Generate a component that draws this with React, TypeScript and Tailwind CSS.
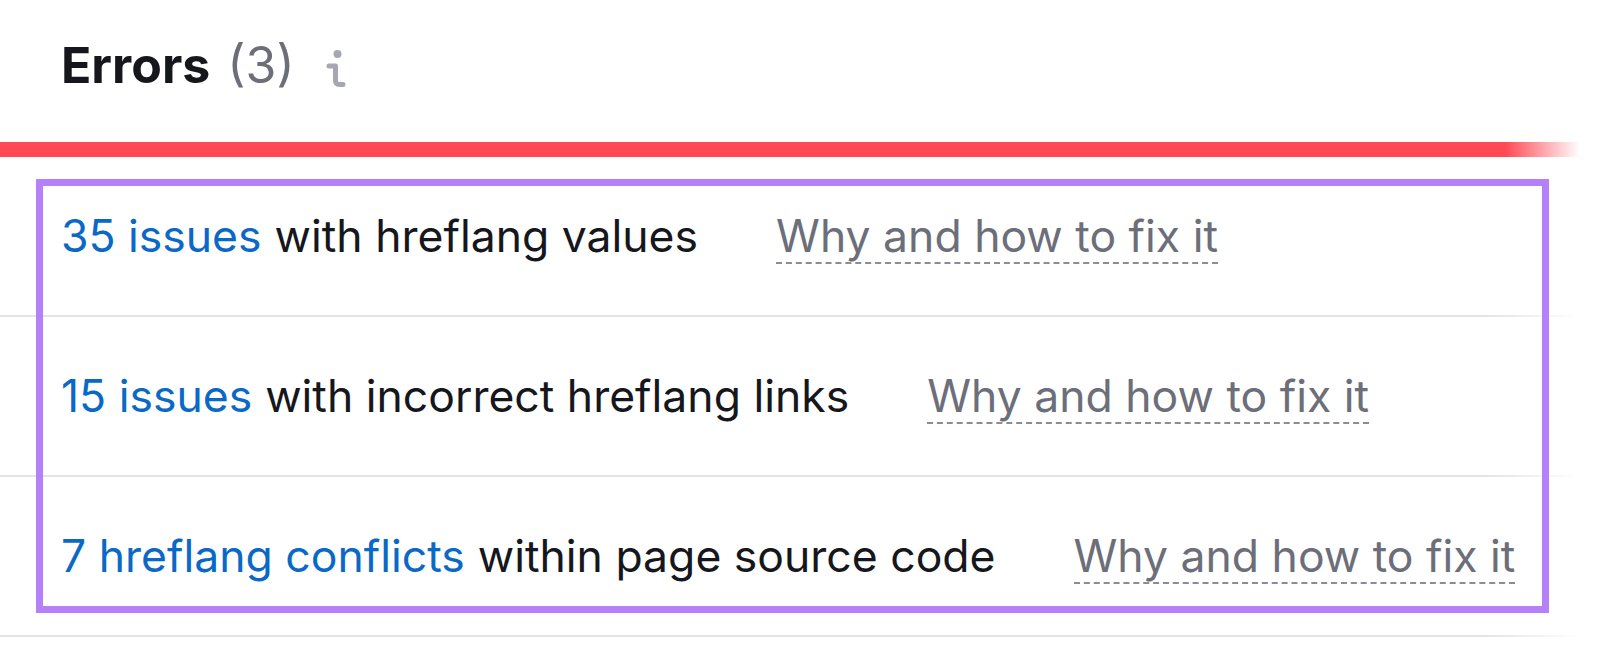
import { Fragment } from "react";

type Issue = { count: string; rest: string };

const ISSUES: Issue[] = [
  { count: "35 issues", rest: "with hreflang values" },
  { count: "15 issues", rest: "with incorrect hreflang links" },
  { count: "7 hreflang conflicts", rest: "within page source code" },
];

function InfoIcon() {
  return (
    <svg width="24" height="40" viewBox="0 0 24 40" fill="none" className="text-[#a5a7b2]">
      <circle cx="14.5" cy="5" r="4" fill="currentColor" />
      <path
        d="M6 17 H12.5 V31.5 Q12.5 35.5 16.5 35.5 H20"
        stroke="currentColor"
        strokeWidth="5"
        strokeLinecap="round"
        strokeLinejoin="round"
      />
    </svg>
  );
}

function Divider() {
  return (
    <div className="flex h-[2px] w-[1580px]">
      <div className="flex-1 bg-[#e4e4e8]" />
      <div className="w-[90px] bg-gradient-to-r from-[#e4e4e8] to-transparent" />
    </div>
  );
}

export default function App() {
  return (
    <div className="relative h-[665px] w-[1600px] overflow-hidden bg-white font-['Inter',sans-serif]">
      {/* Section title */}
      <div className="flex h-[142px] items-start pl-[61px] pt-[40px]">
        <h2 className="text-[50px] font-bold leading-none text-[#16171c]">Errors</h2>
        <span className="ml-[17px] text-[50px] leading-none text-[#6c6e79]">(3)</span>
        <span className="ml-[28px] mt-[9px]">
          <InfoIcon />
        </span>
      </div>

      {/* Severity bar */}
      <div className="flex h-[15px] w-[1580px]">
        <div className="flex-1 bg-[#ff4953]" />
        <div className="w-[75px] bg-gradient-to-r from-[#ff4953] to-transparent" />
      </div>

      {ISSUES.map((issue) => (
        <Fragment key={issue.count}>
          <div className="flex h-[158px] items-center pl-[61px] text-[44.5px] leading-none">
            <span className="text-[#0a69c6]">{issue.count}</span>
            <span className="ml-[13px] text-[#16171c]">{issue.rest}</span>
            <span className="-mb-[6px] ml-[78px] border-b-2 border-dashed border-[#8a8c96] pb-[4px] text-[#6c6e79]">
              Why and how to fix it
            </span>
          </div>
          <Divider />
        </Fragment>
      ))}

      {/* Highlight frame around the issue list */}
      <div className="pointer-events-none absolute left-[36px] top-[179px] h-[434px] w-[1513px] border-[7px] border-[#b580f8]" />
    </div>
  );
}
